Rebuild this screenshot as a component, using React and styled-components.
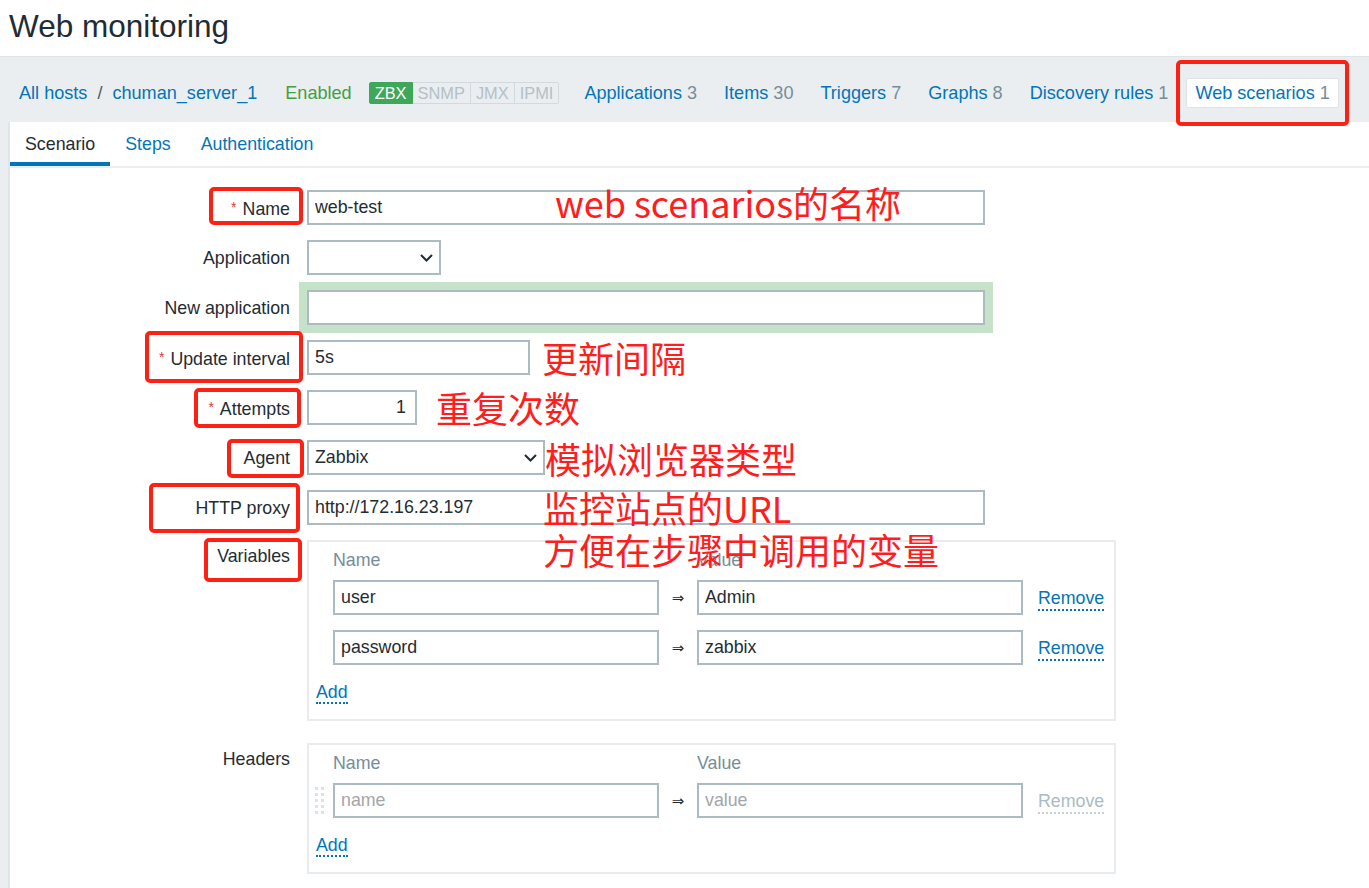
import React from 'react';
import styled, { createGlobalStyle, css } from 'styled-components';

const GlobalStyle = createGlobalStyle`
  html, body { margin: 0; padding: 0; overflow: hidden; }
  body {
    background: #ebeef0;
    font-family: "Liberation Sans", Arial, sans-serif;
    color: #1f2c33;
  }
`;

const Page = styled.div`
  position: relative;
  width: 1369px;
  height: 888px;
  display: flex;
  flex-direction: column;
  overflow: hidden;
  font-size: 17.8px;
`;

const Header = styled.header`
  background: #fff;
  height: 57px;
  box-sizing: border-box;
  padding-left: 9px;
  border-bottom: 1px solid #dfe4e7;
`;

const Title = styled.h1`
  margin: 0;
  font-weight: normal;
  font-size: 31.5px;
  line-height: 53px;
  color: #1f2c33;
`;

const HostNav = styled.nav`
  display: flex;
  align-items: center;
  height: 65px;
  box-sizing: border-box;
  padding: 21px 0 14px 19px;
  font-size: 18.1px;
`;

const Crumbs = styled.div`
  display: flex;
  align-items: center;
`;

const Link = styled.a`
  color: #0275b8;
  text-decoration: none;
  white-space: nowrap;
`;

const Sep = styled.span`
  color: #4f5b61;
  margin: 0 10px;
`;

const Status = styled.span`
  color: #429e47;
  margin-left: 28px;
`;

const Badges = styled.div`
  display: flex;
  margin-left: 17px;
  height: 22px;
  font-size: 16.4px;
`;

const Badge = styled.span`
  display: flex;
  align-items: center;
  padding: 0 5px;
  box-sizing: border-box;
  height: 22px;
  border: 1px solid #d3dadd;
  border-left-width: 0;
  color: #b4c0c6;
  ${p => p.$first && css`
    border-left-width: 1px;
    border-radius: 2px 0 0 2px;
  `}
  ${p => p.$last && css`border-radius: 0 2px 2px 0;`}
  ${p => p.$on && css`
    background: #3ea75a;
    border-color: #3ea75a;
    color: #fff;
  `}
`;

const NavTabs = styled.div`
  display: flex;
  align-items: center;
  gap: 9px;
  margin-left: 16px;
`;

const NavTab = styled.a`
  display: flex;
  align-items: center;
  height: 30px;
  box-sizing: border-box;
  padding: 0 9px;
  color: #0275b8;
  text-decoration: none;
  white-space: nowrap;
  ${p => p.$active && css`
    background: #fff;
    border: 1px solid #dfe4e7;
    border-radius: 2px;
    padding: 0 8px;
  `}
`;

const Count = styled.span`
  color: #768d99;
  margin-left: 5px;
`;

const Panel = styled.main`
  flex: 1;
  background: #fff;
  margin-left: 8px;
  border-left: 2px solid #e0e5e8;
`;

const TabBar = styled.div`
  display: flex;
  height: 46px;
  box-sizing: border-box;
  border-bottom: 2px solid #ebeef0;
`;

const Tab = styled.a`
  display: flex;
  align-items: center;
  padding: 0 15px;
  height: 44px;
  color: #0275b8;
  text-decoration: none;
  ${p => p.$active && css`
    color: #1f2c33;
    box-shadow: inset 0 -4px 0 #0275b8;
  `}
`;

const Form = styled.div`
  display: grid;
  grid-template-columns: 280px auto;
  column-gap: 17px;
  row-gap: 15px;
  padding-top: 22px;
  align-items: center;
  justify-items: start;
`;

const Label = styled.label`
  justify-self: end;
  text-align: right;
  line-height: 20px;
  color: #1f2c33;
  white-space: nowrap;
  ${p => p.$top && css`
    align-self: start;
    padding-top: 6px;
  `}
  ${p => p.$gapTop && css`margin-top: ${p.$gapTop}px;`}
`;

const Req = styled.span`
  color: #e33734;
  font-size: 14px;
  vertical-align: 3px;
  margin-right: 6px;
`;

const TextInput = styled.input`
  width: ${p => p.$w}px;
  height: 35px;
  box-sizing: border-box;
  border: 2px solid #acbbc2;
  border-radius: 0;
  padding: 0 ${p => (p.$right ? 9 : 6)}px 0 6px;
  font-family: inherit;
  font-size: 17.8px;
  color: #1f2c33;
  background: #fff;
  outline: none;
  text-align: ${p => (p.$right ? 'right' : 'left')};
  ${p => p.$focus && css`box-shadow: 0 0 0 8px #c6e2c9;`}
  &::placeholder { color: #a3a6a8; }
`;

const Select = styled.div`
  width: ${p => p.$w}px;
  height: 35px;
  box-sizing: border-box;
  border: 2px solid #acbbc2;
  padding: 0 6px;
  display: flex;
  align-items: center;
  justify-content: space-between;
  color: #1f2c33;
  background: #fff;
`;

const DynBox = styled.div`
  width: 809px;
  box-sizing: border-box;
  border: 2px solid #e8ecef;
  padding: 8px 0 16px 7px;
  ${p => p.$gapTop && css`margin-top: ${p.$gapTop}px;`}
`;

const DynRow = styled.div`
  display: grid;
  grid-template-columns: 17px 326px 38px 326px auto;
  align-items: center;
  margin-top: ${p => p.$mt || 0}px;
`;

const ColHead = styled.span`
  grid-column: ${p => p.$col};
  color: #768d99;
  line-height: 20px;
`;

const Arrow = styled.span`
  text-align: center;
  font-size: 15px;
  color: #1f2c33;
  font-family: "DejaVu Sans", sans-serif;
`;

const DottedLink = styled.a`
  justify-self: start;
  color: ${p => (p.$disabled ? '#acbbc2' : '#0275b8')};
  border-bottom: 2px dotted ${p => (p.$disabled ? '#c6d0d5' : '#0275b8')};
  line-height: 21px;
  text-decoration: none;
  margin-left: ${p => p.$ml || 0}px;
  margin-top: ${p => (p.$ml ? 4 : 0)}px;
`;

const AddRow = styled.div`
  margin-top: 17px;
`;

const Handle = styled.svg`
  margin-left: -2px;
  display: block;
`;

const RedBox = styled.div`
  position: absolute;
  left: ${p => p.$x}px;
  top: ${p => p.$y}px;
  width: ${p => p.$w}px;
  height: ${p => p.$h}px;
  box-sizing: border-box;
  border: 4px solid #fc2115;
  border-radius: 5px;
  pointer-events: none;
`;

const Note = styled.div`
  position: absolute;
  left: ${p => p.$x}px;
  top: ${p => p.$y}px;
  font-family: "Noto Sans CJK SC", "Noto Sans", sans-serif;
  font-size: 36px;
  line-height: 1;
  color: #ff1d1d;
  white-space: nowrap;
  pointer-events: none;
`;

const Chevron = () => (
  <svg width="13" height="8" viewBox="0 0 13 8">
    <polyline points="1,1 6.5,6.5 12,1" fill="none" stroke="#1f2c33" strokeWidth="2" />
  </svg>
);

const DragHandle = () => (
  <Handle width="11" height="30" viewBox="0 0 11 30">
    {[0, 1, 2, 3, 4].flatMap(r =>
      [0, 1].map(c => (
        <rect key={`${r}-${c}`} x={1 + c * 6} y={1 + r * 6} width="3" height="3" fill="#dde2e5" />
      ))
    )}
  </Handle>
);

const navTabs = [
  ['Applications', 3],
  ['Items', 30],
  ['Triggers', 7],
  ['Graphs', 8],
  ['Discovery rules', 1],
];

const redBoxes = [
  { x: 209, y: 187, w: 94, h: 38 },
  { x: 145, y: 331, w: 158, h: 52 },
  { x: 194, y: 388, w: 107, h: 40 },
  { x: 227, y: 439, w: 77, h: 39 },
  { x: 149, y: 483, w: 151, h: 50 },
  { x: 204, y: 538, w: 98, h: 44 },
  { x: 1176, y: 60, w: 173, h: 66 },
];

const notes = [
  { x: 555, y: 184, t: 'web scenarios的名称' },
  { x: 542, y: 339, t: '更新间隔' },
  { x: 436, y: 389, t: '重复次数' },
  { x: 545, y: 440, t: '模拟浏览器类型' },
  { x: 543, y: 489, t: '监控站点的URL' },
  { x: 543, y: 531, t: '方便在步骤中调用的变量' },
];

export default function App() {
  return (
    <Page>
      <GlobalStyle />
      <Header>
        <Title>Web monitoring</Title>
      </Header>

      <HostNav>
        <Crumbs>
          <Link>All hosts</Link>
          <Sep>/</Sep>
          <Link>chuman_server_1</Link>
        </Crumbs>
        <Status>Enabled</Status>
        <Badges>
          <Badge $first $on>ZBX</Badge>
          <Badge>SNMP</Badge>
          <Badge>JMX</Badge>
          <Badge $last>IPMI</Badge>
        </Badges>
        <NavTabs>
          {navTabs.map(([name, n]) => (
            <NavTab key={name}>
              {name}
              <Count>{n}</Count>
            </NavTab>
          ))}
          <NavTab $active>
            Web scenarios<Count>1</Count>
          </NavTab>
        </NavTabs>
      </HostNav>

      <Panel>
        <TabBar>
          <Tab $active>Scenario</Tab>
          <Tab>Steps</Tab>
          <Tab>Authentication</Tab>
        </TabBar>

        <Form>
          <Label><Req>*</Req>Name</Label>
          <TextInput $w={678} readOnly value="web-test" />

          <Label>Application</Label>
          <Select $w={134}><span /><Chevron /></Select>

          <Label>New application</Label>
          <TextInput $w={678} $focus readOnly value="" />

          <Label><Req>*</Req>Update interval</Label>
          <TextInput $w={223} readOnly value="5s" />

          <Label><Req>*</Req>Attempts</Label>
          <TextInput $w={110} $right readOnly value="1" />

          <Label>Agent</Label>
          <Select $w={238}><span>Zabbix</span><Chevron /></Select>

          <Label>HTTP proxy</Label>
          <TextInput $w={678} readOnly value="http://172.16.23.197" />

          <Label $top>Variables</Label>
          <DynBox>
            <DynRow>
              <ColHead $col={2}>Name</ColHead>
              <ColHead $col={4}>Value</ColHead>
            </DynRow>
            <DynRow $mt={10}>
              <span />
              <TextInput $w={326} readOnly value="user" />
              <Arrow>⇒</Arrow>
              <TextInput $w={326} readOnly value="Admin" />
              <DottedLink $ml={15}>Remove</DottedLink>
            </DynRow>
            <DynRow $mt={15}>
              <span />
              <TextInput $w={326} readOnly value="password" />
              <Arrow>⇒</Arrow>
              <TextInput $w={326} readOnly value="zabbix" />
              <DottedLink $ml={15}>Remove</DottedLink>
            </DynRow>
            <AddRow>
              <DottedLink>Add</DottedLink>
            </AddRow>
          </DynBox>

          <Label $top $gapTop={7}>Headers</Label>
          <DynBox $gapTop={7}>
            <DynRow>
              <ColHead $col={2}>Name</ColHead>
              <ColHead $col={4}>Value</ColHead>
            </DynRow>
            <DynRow $mt={10}>
              <DragHandle />
              <TextInput $w={326} readOnly placeholder="name" />
              <Arrow>⇒</Arrow>
              <TextInput $w={326} readOnly placeholder="value" />
              <DottedLink $ml={15} $disabled>Remove</DottedLink>
            </DynRow>
            <AddRow>
              <DottedLink>Add</DottedLink>
            </AddRow>
          </DynBox>
        </Form>
      </Panel>

      {redBoxes.map((b, i) => (
        <RedBox key={i} $x={b.x} $y={b.y} $w={b.w} $h={b.h} />
      ))}
      {notes.map((n, i) => (
        <Note key={i} $x={n.x} $y={n.y}>{n.t}</Note>
      ))}
    </Page>
  );
}
